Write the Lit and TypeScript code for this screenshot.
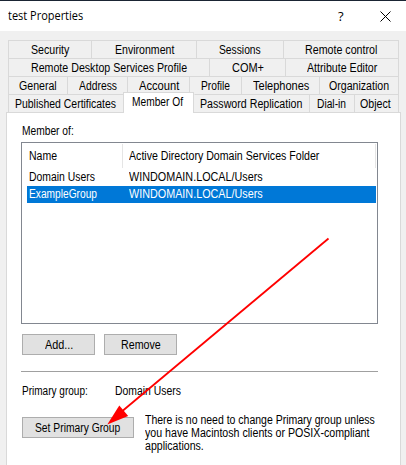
import { LitElement, html, css } from "lit";
import { customElement, property } from "lit/decorators.js";

// A single line of text condensed or stretched to a given width.
@customElement("fit-text")
class FitText extends LitElement {
  @property({ type: Number }) w = 0;
  @property() text = "";
  static styles = css`
    :host { display: block; flex: none; height: 14px; white-space: pre; line-height: 14px; }
    .t { display: inline-block; transform-origin: 0 50%; }
  `;
  render() {
    return html`<span class="t">${this.text}</span>`;
  }
  updated() {
    const t = this.renderRoot.querySelector(".t") as HTMLElement;
    this.style.width = `${this.w}px`;
    t.style.transform = `scaleX(${this.w / t.offsetWidth})`;
  }
}

type Tab = { label: string; w: number; size: number; active?: boolean };
const tab = (label: string, w: number, size: number, active = false): Tab => ({ label, w, size, active });

const rows: Tab[][] = [
  [tab("Security", 38, 83), tab("Environment", 59, 105), tab("Sessions", 42, 87), tab("Remote control", 72, 115)],
  [tab("Remote Desktop Services Profile", 156, 201), tab("COM+", 32, 76), tab("Attribute Editor", 70, 113)],
  [tab("General", 38, 59), tab("Address", 38, 60), tab("Account", 40, 62), tab("Profile", 29, 52), tab("Telephones", 56, 78), tab("Organization", 60, 79)],
  [tab("Published Certificates", 101, 115), tab("Member Of", 51, 71, true), tab("Password Replication", 102, 115), tab("Dial-in", 29, 45), tab("Object", 31, 44)],
];

@customElement("app-root")
class AppRoot extends LitElement {
  static styles = css`
    :host {
      display: block; position: relative; width: 406px; height: 465px; overflow: hidden;
      background: #f0f0f0; color: #000; font: 12px "Liberation Sans", Arial, sans-serif;
    }
    * { box-sizing: border-box; }
    .title {
      height: 31px; border-top: 1px solid #1a2433; background: #fff; display: flex; align-items: center;
      padding: 0 15px 0 8px; font-family: "Open Sans", "Noto Sans", sans-serif;
    }
    .name { margin-right: auto; }
    .help { font-size: 13px; width: 7px; margin-right: 35px; }
    .close { display: block; width: 11px; height: 11px; }
    .tabs { padding: 9px 0 0 8px; }
    .row { display: flex; height: 18px; width: 391px; border-right: 1px solid #d9d9d9; }
    .tab {
      flex: none; height: 18px; border: solid #d9d9d9; border-width: 1px 0 0 1px;
      display: flex; justify-content: center; padding-top: 2px;
    }
    .row:last-child .tab { padding-right: 2px; }
    .active {
      position: relative; z-index: 1; height: 21px; margin: -2px 0 0; background: #fff;
      border-width: 1px 1px 0 1px; padding-top: 2px;
    }
    .active + .tab { border-left-color: transparent; }
    .panel {
      margin-left: 6px; width: 395px; height: 360px; background: #fff; border: 1px solid #d9d9d9;
      padding: 11px 22px 0 14px; display: flex; flex-direction: column;
    }
    .cap { padding-left: 1px; height: 18px; }
    .list { height: 182px; border: 1px solid #828790; padding: 1px 1px 0 5px; }
    .c1 { width: 100px; flex: none; }
    .head { height: 24px; display: flex; margin-bottom: 1px; margin-left: -5px; }
    .h1 { width: 101px; border-right: 1px solid #e5e5e5; padding: 5px 0 0 7px; }
    .h2 { flex: 1; border-right: 1px solid #e5e5e5; padding: 5px 0 0 6px; }
    .line { display: flex; height: 17px; padding: 1px 0 0 2px; }
    .sel { background: #0078d7; color: #fff; }
    .btns { display: flex; gap: 9px; margin: 10px 0 0 1px; }
    .btn {
      height: 21px; width: 73px; background: #e1e1e1; border: 1px solid #adadad;
      display: flex; justify-content: center; padding-top: 3px; flex: none;
    }
    .wide { width: 112px; padding-right: 2px; }
    .rule { height: 1px; background: #a0a0a0; margin-top: 16px; }
    .primary { display: flex; margin: 12px 0 0 1px; }
    .primary > :first-child { margin-right: 27px; }
    .bottom { display: flex; margin: 13px 0 0 1px; gap: 11px; align-items: flex-start; }
    .bottom .btn { margin-top: 6px; }
    .note { display: flex; flex-direction: column; padding-top: 2px; }
    .note fit-text { height: 13px; }
    .arrow { position: absolute; left: 0; top: 0; z-index: 2; }
  `;
  render() {
    return html`
      <div class="title">
        <fit-text class="name" .w=${75} text="test Properties"></fit-text>
        <span class="help">?</span>
        <svg class="close" viewBox="0 0 11 11"><path d="M.5 .5L10.5 10.5M10.5 .5L.5 10.5" stroke="#000" fill="none" /></svg>
      </div>
      <div class="tabs">
        ${rows.map((r) => html`<div class="row">${r.map((t) => html`
          <div class="tab ${t.active ? "active" : ""}" style="width:${t.size}px">
            <fit-text .w=${t.w} text=${t.label}></fit-text>
          </div>`)}</div>`)}
      </div>
      <div class="panel">
        <div class="cap"><fit-text .w=${52} text="Member of:"></fit-text></div>
        <div class="list">
          <div class="head">
            <div class="h1"><fit-text .w=${28} text="Name"></fit-text></div>
            <div class="h2"><fit-text .w=${190} text="Active Directory Domain Services Folder"></fit-text></div>
          </div>
          <div class="line">
            <div class="c1"><fit-text .w=${66} text="Domain Users"></fit-text></div>
            <fit-text .w=${134} text="WINDOMAIN.LOCAL/Users"></fit-text>
          </div>
          <div class="line sel">
            <div class="c1"><fit-text .w=${68} text="ExampleGroup"></fit-text></div>
            <fit-text .w=${134} text="WINDOMAIN.LOCAL/Users"></fit-text>
          </div>
        </div>
        <div class="btns">
          <div class="btn"><fit-text .w=${28} text="Add..."></fit-text></div>
          <div class="btn"><fit-text .w=${40} text="Remove"></fit-text></div>
        </div>
        <div class="rule"></div>
        <div class="primary">
          <fit-text .w=${66} text="Primary group:"></fit-text>
          <fit-text .w=${66} text="Domain Users"></fit-text>
        </div>
        <div class="bottom">
          <div class="btn wide"><fit-text .w=${85} text="Set Primary Group"></fit-text></div>
          <div class="note">
            <fit-text .w=${230} text="There is no need to change Primary group unless"></fit-text>
            <fit-text .w=${224} text="you have Macintosh clients or POSIX-compliant"></fit-text>
            <fit-text .w=${59} text="applications."></fit-text>
          </div>
        </div>
      </div>
      <svg class="arrow" width="406" height="465" viewBox="0 0 406 465">
        <path d="M328.5 238.5L120 413" stroke="#f00" stroke-width="1.8" fill="none" />
        <path d="M107.3 424.5L119.3 405.5L128.2 416Z" fill="#f00" />
      </svg>
    `;
  }
}
